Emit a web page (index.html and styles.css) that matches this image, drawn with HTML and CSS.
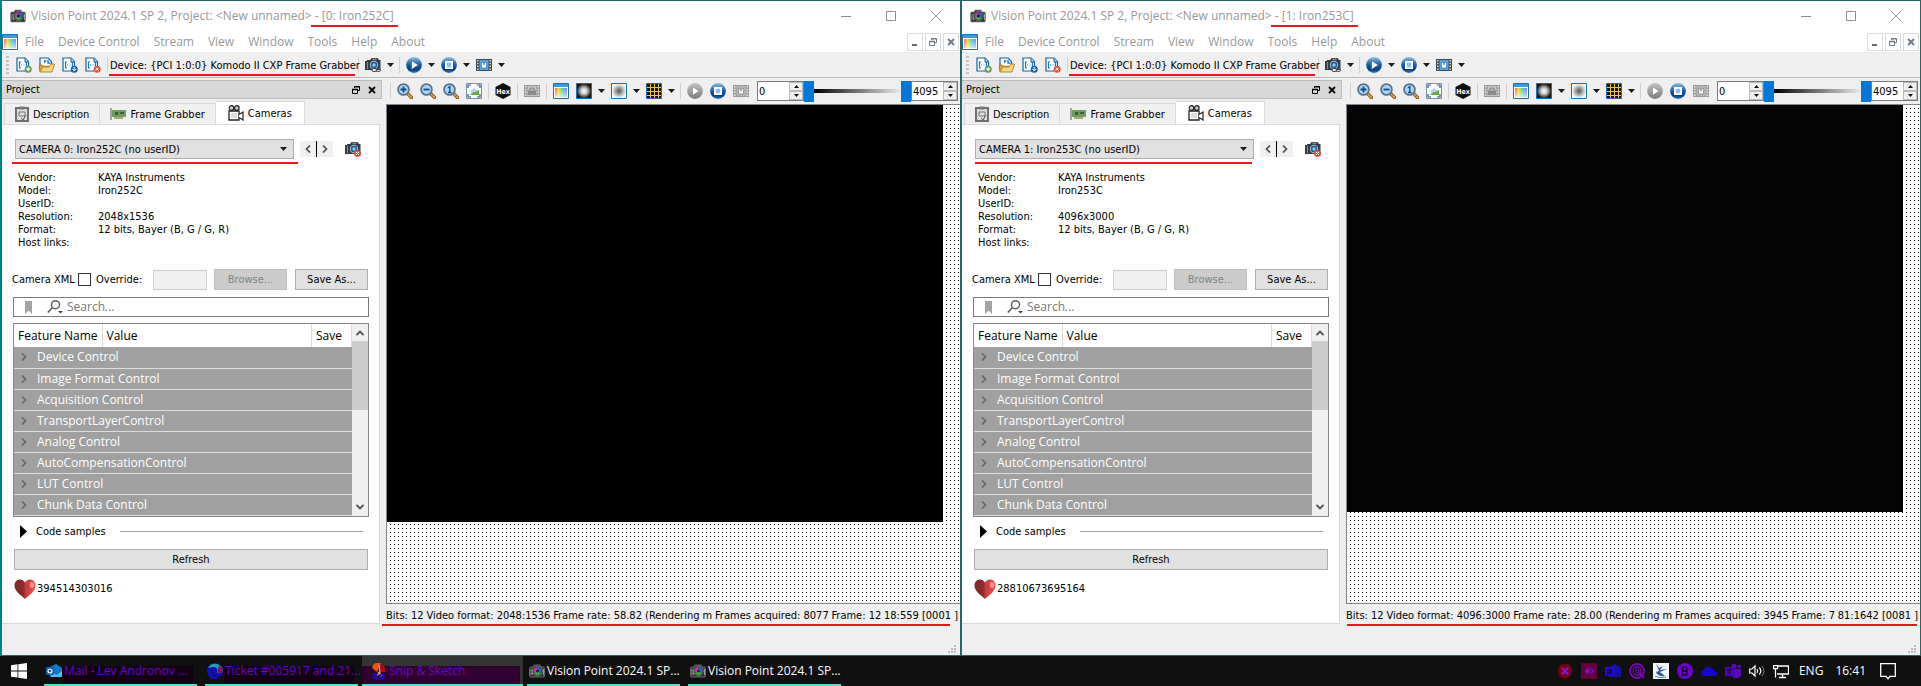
FILE: index.html
```html
<!DOCTYPE html>
<html lang="en">
<head>
<meta charset="utf-8">
<title>Vision Point 2024.1 SP 2</title>
<link rel="stylesheet" href="styles.css">
</head>
<body>
<svg class="sprite" aria-hidden="true">
  <defs>
    <linearGradient id="blueBall" x1="0" y1="0" x2="0" y2="1"><stop offset="0" stop-color="#8fc0e6"/><stop offset=".45" stop-color="#1c62ab"/><stop offset=".8" stop-color="#0a3f80"/><stop offset="1" stop-color="#2c7cc0"/></linearGradient>
    <linearGradient id="grayBall" x1="0" y1="0" x2="0" y2="1"><stop offset="0" stop-color="#c4c4c4"/><stop offset="1" stop-color="#7c7c7c"/></linearGradient>
    <linearGradient id="rainbow" x1="0" y1="0" x2="1" y2="0"><stop offset="0" stop-color="#ff5a4a"/><stop offset=".3" stop-color="#ffd83a"/><stop offset=".55" stop-color="#5fe36a"/><stop offset=".8" stop-color="#3fb4ff"/><stop offset="1" stop-color="#b05cff"/></linearGradient>
    <linearGradient id="fadeWhite" x1="0" y1="0" x2="0" y2="1"><stop offset="0" stop-color="#fff" stop-opacity="0"/><stop offset="1" stop-color="#fff" stop-opacity=".65"/></linearGradient>
    <radialGradient id="whiteSpot"><stop offset="0" stop-color="#fff"/><stop offset=".4" stop-color="#ccc"/><stop offset="1" stop-color="#111"/></radialGradient>
    <radialGradient id="darkSpot"><stop offset="0" stop-color="#555"/><stop offset=".4" stop-color="#999"/><stop offset="1" stop-color="#fff"/></radialGradient>
    <linearGradient id="heartFill" x1="0" y1="0" x2="1" y2="0"><stop offset="0" stop-color="#7c2a2c"/><stop offset=".45" stop-color="#8c2c2e"/><stop offset=".5" stop-color="#c43a3a"/><stop offset="1" stop-color="#f05050"/></linearGradient>
  </defs>
  <symbol id="i-app" viewBox="0 0 16 14">
    <path d="M1 3h3l1-2h6l1 2h3l.5 2v6l-.5 2H1l-.5-2V5z" fill="#2e2e30" stroke="#8a8a8a" stroke-width=".7"/><path d="M1.500 5h1v6h-1zM3.200 5h.8v6h-.8zM14 5h1v6h-1z" fill="#9a9a9a"/>
    <circle cx="8.500" cy="7" r="4.800" fill="#111" stroke="#888" stroke-width=".8"/>
    <path d="M8.500 7V3a4 4 0 0 1 3.500 6z" fill="#3b5be0"/><path d="M8.500 7l3.500 2a4 4 0 0 1-7 0z" fill="#35b84a"/><path d="M8.500 7L5 9a4 4 0 0 1 3.500-6z" fill="#c03cae"/><circle cx="8.500" cy="7" r="1.600" fill="#15301a"/>
  </symbol>
  <symbol id="i-palette" viewBox="0 0 16 16">
    <path d="M.5.500h15v15H.5z" fill="#fff" stroke="#1172b8"/><path d="M1 1h14v3H1z" fill="#3b9bdc"/><path d="M2 5h12v9H2z" fill="url(#rainbow)"/><path d="M2 5h12v9H2z" fill="url(#fadeWhite)"/>
  </symbol>
  <symbol id="i-doc" viewBox="0 0 16 16">
    <path d="M1 1h8l3.500 3.500V14H1z" fill="#fff" stroke="#17609f" stroke-width="1.200"/><path d="M9 1v4h3.500" fill="#bfe0f7" stroke="#17609f"/>
    <path d="M5 5H3.500v6H5M9 5h1.500v6H9M5 8h1M7.500 8h1" fill="none" stroke="#1a7cc4" stroke-width="1.200"/>
  </symbol>
  <symbol id="i-new" viewBox="0 0 16 16"><use href="#i-doc"/><circle cx="12.200" cy="12.200" r="3.500" fill="#5d9d43"/><path d="M12.200 10.200v4M10.200 12.200h4" stroke="#fff" stroke-width="1.200"/></symbol>
  <symbol id="i-open" viewBox="0 0 16 16"><path d="M1 1h8l3.500 3.500V12H1z" fill="#fff" stroke="#17609f" stroke-width="1.200"/><path d="M5.500 6V4h2M9 3v3h2.500" fill="none" stroke="#1a7cc4" stroke-width="1.300"/><path d="M.7 14.500V8h3l1 1.200h8v1.500" fill="#e0a640" stroke="#a8761c" stroke-width=".8"/><path d="M.9 15L4 10h6l2-3h3.500L13 15z" fill="#f8d67c" stroke="#a8761c" stroke-width=".8"/></symbol>
  <symbol id="i-save" viewBox="0 0 16 16"><use href="#i-doc"/><circle cx="12.200" cy="12.200" r="3.500" fill="#1668b0"/><path d="M12.200 10v3.500M10.500 12l1.700 1.900L13.900 12" stroke="#fff" fill="none"/></symbol>
  <symbol id="i-del" viewBox="0 0 16 16"><use href="#i-doc"/><circle cx="12.200" cy="12.200" r="3.500" fill="#e34f3c"/><path d="M10.700 10.700l3 3M13.700 10.700l-3 3" stroke="#fff"/></symbol>
  <symbol id="i-cam" viewBox="0 0 16 16">
    <path d="M0 4h2V3h3l1.500-2h6L14 3h1.500v10H0z" fill="#333b44"/><path d="M2 5h1v7H2z" fill="#8a949c"/><path d="M7.500 2.200h4" stroke="#aab" />
    <circle cx="9" cy="8" r="4.200" fill="#cfd8de"/><circle cx="9" cy="8" r="3.400" fill="#1e5f9c"/><circle cx="9" cy="8" r="1.700" fill="#8ec9f0"/>
  </symbol>
  <symbol id="i-camlink" viewBox="0 0 16 16"><use href="#i-cam"/><rect x="7" y="11.500" width="5" height="3" rx="1.500" fill="#eee" stroke="#333"/><rect x="11" y="11.500" width="4.500" height="3" rx="1.500" fill="none" stroke="#555"/></symbol>
  <symbol id="i-camdel" viewBox="0 0 16 16"><use href="#i-cam"/><circle cx="12.500" cy="12.500" r="3.500" fill="#e8503c"/><path d="M11 11l3 3M14 11l-3 3" stroke="#fff"/></symbol>
  <symbol id="i-play" viewBox="0 0 16 16"><circle cx="8" cy="8" r="7.900" fill="url(#blueBall)"/><path d="M5.500 3.500v9L12.300 8z" fill="#fff" stroke="#1b4f86" stroke-width=".5"/></symbol>
  <symbol id="i-stop" viewBox="0 0 16 16"><circle cx="8" cy="8" r="7.900" fill="url(#blueBall)"/><path d="M4.900 4.900h6.200v6.200H4.900z" fill="#8cc0ea" stroke="#fff" stroke-width="1.800"/></symbol>
  <symbol id="i-playg" viewBox="0 0 16 16"><circle cx="8" cy="8" r="7.900" fill="url(#grayBall)"/><path d="M5.500 3.500v9L12.300 8z" fill="#fff" stroke="#666" stroke-width=".5"/></symbol>
  <symbol id="i-film" viewBox="0 0 16 16"><path d="M0 2h16v12H0z" fill="#3c4750"/><path d="M3.500 3h9v10h-9z" fill="#54a6e0"/><path d="M1.800 3v10M14.200 3v10" stroke="#e8e8e8" stroke-width="1.400" stroke-dasharray="1.500 1.300"/><path d="M5.500 11V5.500h2L8 8l.5-2.500h2V11z" fill="#fff" stroke="#276aa0" stroke-width=".6"/></symbol>
  <symbol id="i-filmg" viewBox="0 0 16 16"><path d="M0 2h16v12H0z" fill="#9a9a9a"/><path d="M3.500 3h9v10h-9z" fill="#b4b4b4"/><path d="M1.800 3v10M14.200 3v10" stroke="#eee" stroke-width="1.400" stroke-dasharray="1.500 1.300"/><path d="M5.500 11V5.500h2L8 8l.5-2.500h2V11z" fill="#eee" stroke="#808080" stroke-width=".6"/></symbol>
  <symbol id="i-filmlock" viewBox="0 0 16 16"><path d="M0 2h16v12H0z" fill="#9a9a9a"/><path d="M3.500 3h9v10h-9z" fill="#c2c2c2"/><path d="M1.800 3v10M14.200 3v10" stroke="#eee" stroke-width="1.400" stroke-dasharray="1.500 1.300"/><path d="M4 7.500h8v4.500H4z" fill="#8a8a8a"/><path d="M5.500 7.500a2.500 2.500 0 0 1 5 0" fill="none" stroke="#8a8a8a" stroke-width="1.200"/></symbol>
  <symbol id="i-lens" viewBox="0 0 16 16"><path d="M10.800 10.800L14.500 14.500" stroke="#8a5520" stroke-width="3.400" stroke-linecap="round"/><path d="M11 11l3.400 3.400" stroke="#e0a055" stroke-width="1.600" stroke-linecap="round"/><circle cx="6.500" cy="6.500" r="5.400" fill="#a8d8f8" stroke="#5a7088" stroke-width="1.800"/></symbol>
  <symbol id="i-zin" viewBox="0 0 16 16"><use href="#i-lens"/><path d="M6.500 3.500v6M3.500 6.500h6" stroke="#0d4b86" stroke-width="1.800"/></symbol>
  <symbol id="i-zout" viewBox="0 0 16 16"><use href="#i-lens"/><path d="M3.500 6.500h6" stroke="#0d4b86" stroke-width="1.800"/></symbol>
  <symbol id="i-zone" viewBox="0 0 16 16"><use href="#i-lens"/><path d="M5.200 4.800L6.800 3.500v6M5 9.500h3.500" fill="none" stroke="#0d4b86" stroke-width="1.300"/></symbol>
  <symbol id="i-fit" viewBox="0 0 16 16"><path d="M.5.500h15v15H.5z" fill="#fff" stroke="#7c90a0"/><path d="M2 5V2h3M11 2h3v3M14 11v3h-3M5 14H2v-3" fill="none" stroke="#1c5a90" stroke-width="1.200"/><path d="M4 8l4-3 4 3-6 2z" fill="#a8d4f0"/><path d="M4 12l2-2 3-1 4-2v5z" fill="#6aa648"/></symbol>
  <symbol id="i-spotw" viewBox="0 0 16 16"><path d="M.5.500h15v15H.5z" fill="url(#whiteSpot)" stroke="#1172b8"/></symbol>
  <symbol id="i-spotd" viewBox="0 0 16 16"><path d="M.5.500h15v15H.5z" fill="url(#darkSpot)" stroke="#1172b8"/></symbol>
  <symbol id="i-grid" viewBox="0 0 16 16"><path d="M.5.500h15v15H.5z" fill="#111" stroke="#1172b8"/><path d="M4.500 1v14M8.500 1v14M12.500 1v14M1 4.500h14M1 8.500h14M1 12.500h14" stroke="#f2c81e"/></symbol>
  <symbol id="i-clip" viewBox="0 0 14 16"><path d="M1 2h12v13H1z" fill="#ddd" stroke="#707070" stroke-width="2"/><path d="M4.500.500h5v3h-5z" fill="#777"/><path d="M4 6h6v4H4z" fill="none" stroke="#777"/><path d="M6 12l2 2 3-5" fill="none" stroke="#555"/></symbol>
  <symbol id="i-card" viewBox="0 0 16 12"><path d="M1 0v12" stroke="#888" stroke-width="1.500"/><path d="M2 2h14v7H2z" fill="#6d9f5c"/><path d="M5 4h3v3H5zM10 4h4v2h-4z" fill="#3c5c3a"/><path d="M4 10h9" stroke="#9a8f3f" stroke-width="1.500"/></symbol>
  <symbol id="i-movie" viewBox="0 0 16 16"><circle cx="3.500" cy="3" r="2.300" fill="#ccc" stroke="#222" stroke-width="1.200"/><circle cx="8.800" cy="3" r="2.300" fill="#ccc" stroke="#222" stroke-width="1.200"/><path d="M1 6h10v9H1z" fill="#fff" stroke="#222" stroke-width="1.300"/><path d="M3 8h6v5H3z" fill="#ddd"/><path d="M11 9.500L15 7v8l-4-2.500" fill="#fff" stroke="#222" stroke-width="1.200"/></symbol>
  <symbol id="i-caret" viewBox="0 0 7 4"><path d="M0 0h7L3.500 4z" fill="#1c1c1c"/></symbol>
  <symbol id="i-up" viewBox="0 0 5 3"><path d="M0 3h5L2.500 0z" fill="#111"/></symbol>
  <symbol id="i-down" viewBox="0 0 5 3"><path d="M0 0h5L2.500 3z" fill="#111"/></symbol>
  <symbol id="i-min" viewBox="0 0 10 10"><path d="M0 5.500h10" stroke="#8c8c8c"/></symbol>
  <symbol id="i-max" viewBox="0 0 10 10"><path d="M.5.500h9v9h-9z" fill="none" stroke="#8c8c8c"/></symbol>
  <symbol id="i-x" viewBox="0 0 10 10"><path d="M0 0l10 10M10 0L0 10" stroke="#8c8c8c"/></symbol>
  <symbol id="i-mmin" viewBox="0 0 8 8"><path d="M1 6h5v2H1z" fill="#5f6b75"/></symbol>
  <symbol id="i-restore" viewBox="0 0 8 8"><path d="M2.500 2V.500h5v4H6" fill="none" stroke="currentColor"/><path d="M2 1h6" stroke="currentColor"/><path d="M.5 3.500h5v4h-5z" fill="none" stroke="currentColor"/><path d="M0 3.500h6" stroke="currentColor" stroke-width="1.500"/></symbol>
  <symbol id="i-mx" viewBox="0 0 8 8"><path d="M1 1l6 6M7 1L1 7" stroke="currentColor" stroke-width="1.800"/></symbol>
  <symbol id="i-lt" viewBox="0 0 6 8"><path d="M5 .5L1.500 4 5 7.500" fill="none" stroke="currentColor" stroke-width="1.700"/></symbol>
  <symbol id="i-gt" viewBox="0 0 6 8"><path d="M1 .5L4.500 4 1 7.500" fill="none" stroke="currentColor" stroke-width="1.700"/></symbol>
  <symbol id="i-su" viewBox="0 0 8 6"><path d="M.5 5L4 1.500 7.500 5" fill="none" stroke="#505050" stroke-width="1.800"/></symbol>
  <symbol id="i-sd" viewBox="0 0 8 6"><path d="M.5 1L4 4.500 7.500 1" fill="none" stroke="#505050" stroke-width="1.800"/></symbol>
  <symbol id="i-mark" viewBox="0 0 7 13"><path d="M0 0h7v13L3.500 9.500 0 13z" fill="#a3a3a3"/></symbol>
  <symbol id="i-find" viewBox="0 0 16 14"><circle cx="8.500" cy="4.700" r="4" fill="none" stroke="#606060" stroke-width="1.500"/><path d="M5.500 7.500L.8 12.500" stroke="#606060" stroke-width="1.800"/><path d="M11 11h5l-2.500 2.500z" fill="#444"/></symbol>
  <symbol id="i-tri" viewBox="0 0 7 13"><path d="M0 0l7 6.500L0 13z" fill="#000"/></symbol>
  <symbol id="i-heart" viewBox="0 0 22 20"><path d="M11 20C6 15.500.5 12 .5 6.500.5 0 8-1.500 11 3.500 14-1.500 21.500 0 21.500 6.500 21.500 12 16 15.500 11 20z" fill="url(#heartFill)"/><ellipse cx="18" cy="6" rx="2.200" ry="3" fill="#ffb4a4" opacity=".7"/></symbol>
  <symbol id="i-grip" viewBox="0 0 8 8"><path d="M6 0h2v2H6zM3 3h2v2H3zM6 3h2v2H6zM0 6h2v2H0zM3 6h2v2H3zM6 6h2v2H6z" fill="#bdbdbd"/></symbol>
  <symbol id="i-win" viewBox="0 0 16 16"><path d="M0 2.200l6.500-.9v6.200H0zM7.300 1.200L16 0v7.500H7.300zM0 8.400h6.500v6.200L0 13.700zM7.300 8.400H16V16l-8.700-1.200z" fill="#fff"/></symbol>
  <symbol id="i-mail" viewBox="0 0 16 16"><path d="M4 4l6-3 6 4v9H4z" fill="#1677c8"/><path d="M5 8l5.500 4L16 8v6H5z" fill="#4cc0f4"/><rect y="4" width="8" height="8" rx="1" fill="#0e5ea8"/><circle cx="4" cy="8" r="2" fill="none" stroke="#fff" stroke-width="1.200"/></symbol>
  <symbol id="i-edge" viewBox="0 0 16 16"><circle cx="8" cy="8" r="8" fill="#0a12c8"/><path d="M1 5a8 8 0 0 1 14.500 1c.8 3-1.500 4-4 4-1.500 0-1.500-1-1-2 .5-2-1-4-4-4S2 5 1 5z" fill="#2aa0a8"/><path d="M12 2c3 2 4 5 3.500 7-2 2-5 1-5 0z" fill="#7a1c58"/><path d="M5.500 7c-1 4 2 7 6 6.500 1 0 2-.5 3-1" fill="none" stroke="#28064c" stroke-width="1.500"/></symbol>
  <symbol id="i-snip" viewBox="0 0 16 16"><path d="M1 5a6 6 0 0 1 9-4.500L6 9z" fill="#e85414"/><path d="M9 1a6 6 0 0 1 5 8H8z" fill="#a80c1c"/><path d="M8 2l1 8-4 3M7 9l4 4" fill="none" stroke="#f09a60" stroke-width="1.300"/><circle cx="4" cy="13" r="2" fill="none" stroke="#1010e0" stroke-width="1.500"/><circle cx="11" cy="13.500" r="2" fill="none" stroke="#1010e0" stroke-width="1.500"/></symbol>
  <symbol id="t-x" viewBox="0 0 16 16"><circle cx="8" cy="8" r="7.500" fill="#6e0208"/><path d="M4.500 4.500l7 7M11.500 4.500l-7 7" stroke="#8a10d8" stroke-width="2.200"/></symbol>
  <symbol id="t-any" viewBox="0 0 16 16"><path d="M0 0h16v16H0z" fill="#64003c"/><path d="M6.500 5l3 3-3 3-3-3z" fill="#7a0ad8"/><path d="M9 5l3.500 3L9 11" fill="none" stroke="#7a0ad8" stroke-width="1.300"/></symbol>
  <symbol id="t-mail" viewBox="0 0 16 16"><path d="M5 4l5-3 6 4v9H5z" fill="#1212a8"/><rect y="4" width="9" height="9" fill="#2408d0"/><path d="M3 7h3v3H3z" fill="none" stroke="#0a002c" stroke-width="1.200"/></symbol>
  <symbol id="t-at" viewBox="0 0 16 16"><circle cx="8" cy="8" r="7" fill="none" stroke="#7a04b8" stroke-width="1.800"/><circle cx="8" cy="8" r="4" fill="none" stroke="#7a04b8" stroke-width="1.300"/><circle cx="8" cy="8" r="1.700" fill="none" stroke="#7a04b8"/><path d="M10 10l5 5" stroke="#7a04b8" stroke-width="1.800"/></symbol>
  <symbol id="t-bird" viewBox="0 0 16 16"><path d="M0 0h16v16H0z" fill="#f4f6fa"/><path d="M3 1l3 4 4-2-3 4 7-1-7 3 5 4c-4 1-8-1-9-4l3-1z" fill="#2a5a9c"/><path d="M2 13c4 2 8 2 11 1" fill="none" stroke="#4a82b8"/></symbol>
  <symbol id="t-b" viewBox="0 0 16 16"><circle cx="8" cy="8" r="8" fill="#6a04cc"/><path d="M5.500 4v8h3a2.200 2.200 0 0 0 .5-4.200A2 2 0 0 0 8.500 4zM5.500 8H9" fill="none" stroke="#1c0034" stroke-width="1.500"/></symbol>
  <symbol id="t-cloud" viewBox="0 0 16 16"><path d="M3 13a3 3 0 0 1 0-6 4 4 0 0 1 7-2 4 4 0 0 1 4 3 2.500 2.500 0 0 1-1 5z" fill="#1608c8"/></symbol>
  <symbol id="t-teams" viewBox="0 0 16 16"><circle cx="9" cy="3" r="2.500" fill="#5a08b8"/><circle cx="14" cy="3.500" r="1.800" fill="#5a08b8"/><path d="M6 6h10v6a4 4 0 0 1-4 3H8z" fill="#5a08b8"/><rect y="4" width="9" height="9" fill="#4a04b0"/><path d="M2.500 6.500h4M4.500 6.500V11" stroke="#16002c" stroke-width="1.400"/></symbol>
  <symbol id="t-vol" viewBox="0 0 16 16"><path d="M.7 6H3l3-3v10l-3-3H.7z" fill="none" stroke="#fff" stroke-width="1.200"/><path d="M8 6q1.500 2 0 4M10.300 4.500q3 3.500 0 7" fill="none" stroke="#fff" stroke-width="1.200"/><path d="M12.800 3q4.500 5 0 10" fill="none" stroke="#888"/></symbol>
  <symbol id="t-net" viewBox="0 0 16 16"><path d="M4 3h11.500v8H4M9.500 11v3M6 14.500h7" fill="none" stroke="#fff" stroke-width="1.300"/><path d="M.6 2.600h4v3h-4zM2.500 5.500v9" fill="#111" stroke="#fff" stroke-width="1.200"/></symbol>
  <symbol id="t-note" viewBox="0 0 16 17"><path d="M.7.700h14.600v12.600H10L8 15.700l-2-2.400H.7z" fill="none" stroke="#fff" stroke-width="1.300"/></symbol>
</svg>

<template id="window-template">
  <section class="window">
    <header class="titlebar">
      <svg class="app-icon"><use href="#i-app"/></svg>
      <h1 class="title">Vision Point 2024.1 SP 2, Project: &lt;New unnamed&gt; <span class="marked mark-title">- [<span data-field="index"></span>: <span data-field="model"></span>]</span></h1>
      <div class="win-buttons">
        <button aria-label="Minimize"><svg><use href="#i-min"/></svg></button>
        <button aria-label="Maximize"><svg><use href="#i-max"/></svg></button>
        <button aria-label="Close"><svg><use href="#i-x"/></svg></button>
      </div>
    </header>
    <nav class="menubar">
      <svg class="i16"><use href="#i-palette"/></svg>
      <button>File</button><button>Device Control</button><button>Stream</button><button>View</button><button>Window</button><button>Tools</button><button>Help</button><button>About</button>
      <div class="mdi-buttons">
        <button aria-label="Minimize view"><svg><use href="#i-mmin"/></svg></button>
        <button aria-label="Restore view"><svg><use href="#i-restore"/></svg></button>
        <button aria-label="Close view"><svg><use href="#i-mx"/></svg></button>
      </div>
    </nav>
    <div class="toolbar main-tools">
      <i class="handle"></i>
      <button class="tool" aria-label="New"><svg><use href="#i-new"/></svg></button>
      <button class="tool" aria-label="Open"><svg><use href="#i-open"/></svg></button>
      <button class="tool" aria-label="Save"><svg><use href="#i-save"/></svg></button>
      <button class="tool" aria-label="Delete"><svg><use href="#i-del"/></svg></button>
      <i class="sep"></i>
      <span class="device marked mark-device">Device: {PCI 1:0:0} Komodo II CXP Frame Grabber</span>
      <i class="sep"></i>
      <button class="tool" aria-label="Connect camera"><svg><use href="#i-camlink"/></svg></button>
      <button class="drop" aria-label="Camera options"><svg><use href="#i-caret"/></svg></button>
      <i class="sep"></i>
      <button class="tool" aria-label="Start"><svg><use href="#i-play"/></svg></button>
      <button class="drop" aria-label="Start options"><svg><use href="#i-caret"/></svg></button>
      <button class="tool" aria-label="Stop"><svg><use href="#i-stop"/></svg></button>
      <button class="drop" aria-label="Stop options"><svg><use href="#i-caret"/></svg></button>
      <button class="tool" aria-label="Record"><svg><use href="#i-film"/></svg></button>
      <button class="drop" aria-label="Record options"><svg><use href="#i-caret"/></svg></button>
    </div>
    <div class="workspace">
      <aside class="dock">
        <div class="dock-title">Project
          <button aria-label="Float"><svg><use href="#i-restore"/></svg></button>
          <button aria-label="Close"><svg><use href="#i-mx"/></svg></button>
        </div>
        <div class="tabs">
          <button class="tab"><svg class="clip"><use href="#i-clip"/></svg>Description</button>
          <button class="tab"><svg class="i16"><use href="#i-card"/></svg>Frame Grabber</button>
          <button class="tab active"><svg class="i16"><use href="#i-movie"/></svg>Cameras</button>
        </div>
        <div class="panel">
          <div class="camera-row">
            <label class="camera-select marked mark-camera">
              <select aria-label="Camera"><option data-field="camera"></option></select>
              <svg><use href="#i-caret"/></svg>
            </label>
            <div class="nav-pair">
              <button aria-label="Previous camera"><svg><use href="#i-lt"/></svg></button>
              <button aria-label="Next camera"><svg><use href="#i-gt"/></svg></button>
            </div>
            <button class="plain" aria-label="Disconnect camera"><svg class="i16"><use href="#i-camdel"/></svg></button>
          </div>
          <dl class="info">
            <dt>Vendor:</dt><dd>KAYA Instruments</dd>
            <dt>Model:</dt><dd data-field="model"></dd>
            <dt>UserID:</dt><dd></dd>
            <dt>Resolution:</dt><dd data-field="resolution"></dd>
            <dt>Format:</dt><dd>12 bits, Bayer (B, G / G, R)</dd>
            <dt>Host links:</dt><dd></dd>
          </dl>
          <div class="xml-row">
            <span>Camera XML</span>
            <label class="override"><input type="checkbox">Override:</label>
            <input class="xml-path" type="text" aria-label="XML path" disabled>
            <button class="push" disabled>Browse...</button>
            <button class="push">Save As...</button>
          </div>
          <div class="search">
            <svg class="mark"><use href="#i-mark"/></svg>
            <svg class="find"><use href="#i-find"/></svg>
            <input type="text" placeholder="Search..." aria-label="Search">
          </div>
          <div class="features">
            <table>
              <colgroup><col class="col-name"><col><col class="col-save"></colgroup>
              <thead><tr><th>Feature Name</th><th>Value</th><th>Save</th></tr></thead>
              <tbody data-rows></tbody>
            </table>
            <div class="scroll">
              <button aria-label="Scroll up"><svg><use href="#i-su"/></svg></button>
              <div class="thumb"></div>
              <button class="scroll-end" aria-label="Scroll down"><svg><use href="#i-sd"/></svg></button>
            </div>
          </div>
          <button class="samples"><svg><use href="#i-tri"/></svg><span>Code samples</span><i></i></button>
          <button class="push refresh">Refresh</button>
          <div class="beat"><svg><use href="#i-heart"/></svg><span data-field="beat"></span></div>
        </div>
      </aside>
      <main class="viewer">
        <div class="toolbar view-tools">
          <i class="sep"></i>
          <button class="tool" aria-label="Zoom in"><svg><use href="#i-zin"/></svg></button>
          <button class="tool" aria-label="Zoom out"><svg><use href="#i-zout"/></svg></button>
          <button class="tool" aria-label="Actual size"><svg><use href="#i-zone"/></svg></button>
          <button class="tool" aria-label="Fit"><svg><use href="#i-fit"/></svg></button>
          <i class="sep"></i>
          <button class="tool" aria-label="Hex"><svg viewBox="0 0 16 16"><path d="M8 0l7.500 4v8L8 16 .5 12V4z" fill="#111"/><text class="hex-label" x="8" y="11" text-anchor="middle">Hex</text></svg></button>
          <i class="sep"></i>
          <button class="tool" aria-label="Lock frame"><svg><use href="#i-filmlock"/></svg></button>
          <i class="sep"></i>
          <button class="tool" aria-label="Palette"><svg><use href="#i-palette"/></svg></button>
          <button class="tool" aria-label="Flat field"><svg><use href="#i-spotw"/></svg></button>
          <button class="drop" aria-label="Flat field options"><svg><use href="#i-caret"/></svg></button>
          <button class="tool" aria-label="Dark field"><svg><use href="#i-spotd"/></svg></button>
          <button class="drop" aria-label="Dark field options"><svg><use href="#i-caret"/></svg></button>
          <button class="tool" aria-label="Grid"><svg><use href="#i-grid"/></svg></button>
          <button class="drop" aria-label="Grid options"><svg><use href="#i-caret"/></svg></button>
          <i class="sep"></i>
          <button class="tool" aria-label="Play"><svg><use href="#i-playg"/></svg></button>
          <button class="tool" aria-label="Stop view"><svg><use href="#i-stop"/></svg></button>
          <button class="tool" aria-label="Record view"><svg><use href="#i-filmg"/></svg></button>
          <div class="levels">
            <div class="spin"><input type="text" value="0" aria-label="Black level"><button aria-label="Up"><svg><use href="#i-up"/></svg></button><button aria-label="Down"><svg><use href="#i-down"/></svg></button></div>
            <div class="range">
              <input class="low" type="range" min="0" max="4095" value="0" aria-label="Low">
              <input class="high" type="range" min="0" max="4095" value="4095" aria-label="High">
            </div>
            <div class="spin"><input type="text" value="4095" aria-label="White level"><button aria-label="Up"><svg><use href="#i-up"/></svg></button><button aria-label="Down"><svg><use href="#i-down"/></svg></button></div>
          </div>
        </div>
        <div class="canvas"><div class="frame"></div></div>
        <div class="status marked mark-status">
          <span>Bits: 12</span><span>Video format: <span data-field="format"></span></span><span>Frame rate: <span data-field="rate"></span> (Rendering m</span><span>Frames acquired: <span data-field="acquired"></span></span><span>Frame: <span data-field="frame"></span></span><span data-field="pixel"></span>
        </div>
        <svg class="grip"><use href="#i-grip"/></svg>
      </main>
    </div>
  </section>
</template>

<div class="desktop" id="desktop"></div>

<footer class="taskbar">
  <button class="start" aria-label="Start"><svg class="i16"><use href="#i-win"/></svg></button>
  <button class="task tinted"><svg class="i16"><use href="#i-mail"/></svg>Mail - Lev Andronov ...</button>
  <button class="task tinted"><svg class="i16"><use href="#i-edge"/></svg>Ticket #005917 and 21...</button>
  <button class="task tinted current"><svg class="i16"><use href="#i-snip"/></svg>Snip &amp; Sketch</button>
  <button class="task"><svg class="i16"><use href="#i-app"/></svg>Vision Point 2024.1 SP...</button>
  <button class="task"><svg class="i16"><use href="#i-app"/></svg>Vision Point 2024.1 SP...</button>
  <div class="tray">
    <svg class="i16"><use href="#t-x"/></svg><svg class="i16"><use href="#t-any"/></svg><svg class="i16"><use href="#t-mail"/></svg><svg class="i16"><use href="#t-at"/></svg><svg class="i16"><use href="#t-bird"/></svg><svg class="i16"><use href="#t-b"/></svg><svg class="i16"><use href="#t-cloud"/></svg><svg class="i16"><use href="#t-teams"/></svg><svg class="i16"><use href="#t-vol"/></svg><svg class="i16"><use href="#t-net"/></svg>
    <span class="lang">ENG</span><time class="clock">16:41</time>
    <svg class="note"><use href="#t-note"/></svg>
  </div>
</footer>
<script src="app.js"></script>
</body>
</html>
```
FILE: app.js
```js
const features = ["Device Control", "Image Format Control", "Acquisition Control", "TransportLayerControl",
  "Analog Control", "AutoCompensationControl", "LUT Control", "Chunk Data Control"];

const cameras = [
  { index: "0", model: "Iron252C", camera: "CAMERA 0: Iron252C (no userID)", resolution: "2048x1536", beat: "394514303016",
    format: "2048:1536", rate: "58.82", acquired: "8077", frame: "12", pixel: "18:559 [0001 ]", view: "ratio-252" },
  { index: "1", model: "Iron253C", camera: "CAMERA 1: Iron253C (no userID)", resolution: "4096x3000", beat: "28810673695164",
    format: "4096:3000", rate: "28.00", acquired: "3945", frame: "7", pixel: "81:1642 [0081 ]", view: "ratio-253" }
];

const template = document.getElementById("window-template");
const desktop = document.getElementById("desktop");

for (const cam of cameras) {
  const node = template.content.cloneNode(true);
  node.querySelectorAll("[data-field]").forEach(el => { el.textContent = cam[el.dataset.field]; });
  node.querySelector(".frame").classList.add(cam.view);
  node.querySelector(".window").classList.add("window-" + cam.index);
  node.querySelector("[data-rows]").innerHTML = features
    .map(name => `<tr><td colspan="3"><svg><use href="#i-gt"/></svg>${name}</td></tr>`).join("");
  desktop.append(node);
}
```
FILE: styles.css
```css
:root {
  --ui: "DejaVu Sans Condensed", Tahoma, sans-serif;
  --shell: "Open Sans", "Segoe UI", sans-serif;
}
* { box-sizing: border-box; }
body { margin: 0; min-height: 100vh; display: flex; flex-direction: column; font: 11px/13px var(--ui); color: #000; background: #101010; }
button, input, select { font: inherit; color: inherit; margin: 0; }
button { border: 0; padding: 0; background: none; display: flex; align-items: center; }
svg { display: block; flex: none; }
.sprite { position: absolute; width: 0; height: 0; }
.i16 { width: 16px; height: 16px; }
.hex-label { font: bold 7px "DejaVu Sans Condensed", sans-serif; fill: #fff; }

.desktop { flex: 1; display: grid; grid-template-columns: 1fr 1fr; border-right: 1px solid #2b6464; }
.window { display: flex; flex-direction: column; min-width: 0; background: #efefef; border: solid #2b6464; border-width: 1px 0 1px 2px; }
.window-0 { border-left-color: #008087; }

.titlebar { display: flex; align-items: center; height: 30px; padding: 0 19px 0 8px; gap: 5px; background: #fff; }
.app-icon { width: 16px; height: 14px; }
.title { margin: 0; flex: 1; font: 12px/16px var(--shell); color: #999; white-space: nowrap; }
.win-buttons { display: flex; gap: 35px; }
.win-buttons svg { width: 10px; height: 10px; }

.menubar { display: flex; align-items: center; height: 22px; background: #fff; border-bottom: 1px solid #ededed; font: 12px/16px var(--shell); color: #999; }
.menubar > button { padding: 0 7px; }
.mdi-buttons { margin-left: auto; display: flex; gap: 2px; padding-right: 1px; color: #6d7884; }
.mdi-buttons button { width: 16px; height: 18px; justify-content: center; border: 1px solid #dcdcdc; }
.mdi-buttons svg { width: 8px; height: 8px; }

.marked { position: relative; }
.marked::after { content: ""; position: absolute; height: 2px; background: #e8191e; }
.mark-title::after { left: -4px; right: -4px; top: 18px; }
.mark-device::after { left: -1px; right: 0; bottom: -4px; }
.mark-camera::after { left: -3px; right: -4px; bottom: -5px; }
.mark-status::after { left: -4px; right: 10px; bottom: 0; }
.window-1 .mark-camera::after { left: 0; right: 2px; }
.window-1 .mark-status::after { left: 1px; right: 3px; }

.toolbar { display: flex; align-items: center; }
.main-tools { height: 25px; padding-left: 4px; border-bottom: 1px solid #b9b9b9; }
.handle { width: 3px; height: 18px; margin-right: 3px; background: repeating-linear-gradient(#c4c4c4 0 2px, transparent 2px 4px); }
.tool { width: 23px; height: 22px; justify-content: center; }
.tool svg { width: 16px; height: 16px; }
.drop { width: 12px; height: 22px; justify-content: center; }
.drop svg { width: 7px; height: 4px; }
.sep { width: 6px; height: 16px; background: linear-gradient(#cfcfcf, #cfcfcf) center / 1px 100% no-repeat; }
.device { white-space: nowrap; width: 245px; }

.workspace { flex: 1; display: flex; }
.dock { flex: none; width: 380px; display: flex; flex-direction: column; padding: 2px 0 0; }
.dock-title { display: flex; align-items: center; height: 19px; padding: 0 5px 0 4px; background: #d8d8d8; border: 1px solid #bcbcbc; border-left: 0; }
.dock-title button { margin-left: 8px; }
.dock-title button:first-of-type { margin-left: auto; }
.dock-title svg { width: 8px; height: 8px; }
.tabs { display: flex; align-items: flex-end; height: 26px; padding: 2px 0 0 2px; margin-bottom: -1px; }
.tab { height: 22px; padding: 0 10px; gap: 4px; border: 1px solid #d9d9d9; border-left-width: 0; background: #f0f0f0; }
.tab:first-child { border-left-width: 1px; }
.tab .clip { width: 14px; height: 16px; }
.tab.active { height: 24px; padding: 0 12px; background: #fff; border-bottom-color: #fff; }
.panel { flex: none; width: 378px; min-height: 500px; background: #fff; border: 1px solid #d9d9d9; border-left: 0; padding: 14px 10px 0 11px; }

.camera-row { display: flex; align-items: center; padding-left: 2px; }
.camera-select { width: 279px; display: flex; align-items: center; }
.camera-select select { appearance: none; width: 100%; height: 20px; padding: 0 3px; border: 1px solid #adadad; border-radius: 0; background: #e1e1e1; }
.camera-select svg { width: 7px; height: 4px; margin-left: -14px; margin-right: 7px; pointer-events: none; }
.nav-pair { display: flex; margin: 0 12px 0 6px; color: #505050; }
.nav-pair button { width: 16px; height: 16px; justify-content: center; background: #f0f0f0; }
.nav-pair button:first-child { border-right: 1px solid #000; width: 17px; }
.nav-pair svg { width: 6px; height: 8px; }

.info { display: grid; grid-template-columns: 80px 1fr; grid-auto-rows: 13px; margin: 12px 0 20px; padding-left: 5px; }
.info dd { margin: 0; }

.xml-row { display: flex; align-items: center; height: 21px; margin-bottom: 7px; white-space: nowrap; }
.xml-row > span { width: 66px; margin-left: -1px; }
.override { display: flex; align-items: center; gap: 5px; width: 75px; }
.override input { appearance: none; flex: none; width: 13px; height: 13px; border: 1px solid #333; background: #fff; }
.xml-path { width: 54px; height: 20px; margin-right: 7px; border: 1px solid #ccc; background: #f0f0f0; }
.push { width: 73px; height: 21px; justify-content: center; border: 1px solid #adadad; background: #e1e1e1; }
.push + .push { margin-left: 8px; }
.push:disabled { color: #838383; background: #ccc; border-color: #bfbfbf; }

.search { display: flex; align-items: center; height: 20px; border: 1px solid #7a7a7a; padding-left: 11px; }
.mark { width: 7px; height: 13px; margin-right: 15px; }
.find { width: 16px; height: 14px; margin-right: 4px; }
.search input { flex: 1; min-width: 0; border: 0; padding: 0; outline: 0; font: 12px/16px var(--shell); }
.search input::placeholder { color: #777; opacity: 1; }

.features { display: flex; margin-top: 6px; border: 1px solid #828790; font: 12px/16px var(--shell); white-space: nowrap; }
.features table { flex: 1; border-collapse: collapse; table-layout: fixed; }
.col-name { width: 87px; }
.col-save { width: 40px; }
.features th { height: 23px; padding: 0 4px; text-align: left; font-weight: normal; border-right: 1px solid #dcdcdc; }
.features td { height: 21px; padding: 0 7px; color: #fff; background: #a0a0a0; border-bottom: 1px solid #dcdcdc; }
.features td svg { display: inline-block; width: 6px; height: 8px; margin-right: 10px; color: #6a6a6a; }
.scroll { width: 16px; display: flex; flex-direction: column; background: #f0f0f0; }
.scroll button { height: 17px; justify-content: center; }
.scroll svg { width: 8px; height: 6px; }
.thumb { height: 69px; background: #cdcdcd; }
.scroll .scroll-end { margin-top: auto; }

.samples { width: 100%; height: 14px; margin-top: 8px; padding-left: 7px; }
.samples svg { width: 7px; height: 13px; margin-right: 9px; }
.samples span { width: 84px; text-align: left; }
.samples i { flex: 1; height: 1px; background: #a0a0a0; margin-right: 6px; }
.refresh { width: 354px; margin: 10px 0 9px 1px; }
.beat { display: flex; align-items: center; padding-left: 1px; gap: 1px; }
.beat svg { width: 22px; height: 20px; }

.viewer { flex: 1; min-width: 0; display: flex; flex-direction: column; padding-left: 4px; }
.view-tools { height: 26px; padding-left: 1px; }
.levels { display: flex; flex: 1; align-items: center; padding: 0 2px 0 5px; }
.spin { flex: none; width: 47px; height: 20px; display: grid; grid-template: 9px 9px / 1fr 14px; border: 1px solid #7a7a7a; background: #fff; }
.spin input { grid-row: span 2; min-width: 0; width: 100%; border: 0; padding: 0 0 0 1px; background: none; }
.spin button { justify-content: center; border: 1px solid #bbb; background: #f0f0f0; }
.spin svg { width: 5px; height: 3px; }
.range { flex: 1; min-width: 0; display: grid; height: 21px; }
.range input { appearance: none; grid-area: 1 / 1; min-width: 0; width: 100%; height: 21px; background: none; pointer-events: none; }
.range .low { background: linear-gradient(90deg, #000 10%, #efefef 92%) center / 100% 4px no-repeat; }
.range input::-webkit-slider-thumb { appearance: none; width: 10px; height: 21px; background: #0078d7; pointer-events: auto; }
.canvas { flex: none; height: 500px; border: 1px solid #828790; border-right: 0; background: linear-gradient(#fff 3px, transparent 3px) 0 0 / 4px 4px, linear-gradient(90deg, #fff 3px, #000 3px) 0 0 / 4px 4px; }
.frame { width: calc(100% - 17px); background: #000; }
.ratio-252 { aspect-ratio: 2048 / 1536; }
.ratio-253 { aspect-ratio: 4096 / 3000; background: #040404; }
.status { display: flex; justify-content: space-between; height: 22px; padding: 5px 2px 0 0; white-space: nowrap; }
.grip { width: 8px; height: 8px; margin: auto 4px 2px auto; }

.taskbar { display: flex; height: 30px; background: #101010; color: #fff; font: 12px/16px var(--shell); white-space: nowrap; }
.start { width: 40px; padding-left: 11px; }
.task { position: relative; width: 161px; padding: 0 0 0 6px; gap: 2px; }
.task::after { content: ""; position: absolute; left: 4px; right: 4px; bottom: 0; height: 2px; background: #5fdcc5; }
.tinted { color: #6a04cc; background: linear-gradient(#120014, #120014) 23px 10px / 130px 18px no-repeat; }
.current { padding-left: 9px; background: linear-gradient(#300030, #300030) 0 10px / 158px 18px no-repeat #333; }
.current::after { left: 0; right: 0; }
.tray { margin-left: auto; display: flex; align-items: center; gap: 8px; padding-right: 25px; }
.lang { margin-left: 2px; }
.clock { margin: 0 6px 0 4px; }
.note { width: 16px; height: 17px; }
```
